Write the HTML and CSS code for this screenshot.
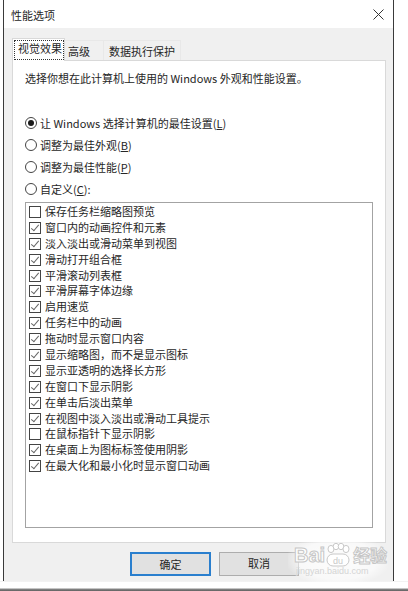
FILE: index.html
```html
<!DOCTYPE html>
<html lang="zh-CN">
<head>
<meta charset="utf-8">
<title>性能选项</title>
<link rel="stylesheet" href="styles.css">
</head>
<body>
<div class="window">
  <div class="titlebar">
    <span class="title">性能选项</span>
    <svg class="close" width="11" height="11" viewBox="0 0 11 11"><path d="M0.5 0.5 L10.5 10.5 M10.5 0.5 L0.5 10.5" stroke="#333" stroke-width="1" fill="none"/></svg>
  </div>
  <div class="client">
    <div class="tabs">
      <div class="tab sel"><span class="focus">视觉效果</span></div>
      <div class="tab t2">高级</div>
      <div class="tab t3">数据执行保护</div>
    </div>
    <div class="panel">
      <p class="desc">选择你想在此计算机上使用的 Windows 外观和性能设置。</p>
      <div class="radios">
        <div class="radio on"><span class="dot"></span><span>让 Windows 选择计算机的最佳设置(<u>L</u>)</span></div>
        <div class="radio"><span class="dot"></span><span>调整为最佳外观(<u>B</u>)</span></div>
        <div class="radio"><span class="dot"></span><span>调整为最佳性能(<u>P</u>)</span></div>
        <div class="radio"><span class="dot"></span><span>自定义(<u>C</u>):</span></div>
      </div>
      <div class="listbox">
        <div class="row"><span class="cb"></span>保存任务栏缩略图预览</div>
        <div class="row"><span class="cb on"></span>窗口内的动画控件和元素</div>
        <div class="row"><span class="cb on"></span>淡入淡出或滑动菜单到视图</div>
        <div class="row"><span class="cb on"></span>滑动打开组合框</div>
        <div class="row"><span class="cb on"></span>平滑滚动列表框</div>
        <div class="row"><span class="cb on"></span>平滑屏幕字体边缘</div>
        <div class="row"><span class="cb on"></span>启用速览</div>
        <div class="row"><span class="cb on"></span>任务栏中的动画</div>
        <div class="row"><span class="cb on"></span>拖动时显示窗口内容</div>
        <div class="row"><span class="cb on"></span>显示缩略图，而不是显示图标</div>
        <div class="row"><span class="cb on"></span>显示亚透明的选择长方形</div>
        <div class="row"><span class="cb on"></span>在窗口下显示阴影</div>
        <div class="row"><span class="cb on"></span>在单击后淡出菜单</div>
        <div class="row"><span class="cb on"></span>在视图中淡入淡出或滑动工具提示</div>
        <div class="row"><span class="cb"></span>在鼠标指针下显示阴影</div>
        <div class="row"><span class="cb on"></span>在桌面上为图标标签使用阴影</div>
        <div class="row"><span class="cb on"></span>在最大化和最小化时显示窗口动画</div>
      </div>
    </div>
    <div class="buttons">
      <div class="btn default">确定</div>
      <div class="btn">取消</div>
    </div>
    <div class="watermark">
      <div class="wm-logo"><span class="wm-bai">Bai</span><svg class="wm-paw" width="26" height="24" viewBox="0 0 26 24"><g fill="#fff" stroke="#c9c9c9" stroke-width="1"><ellipse cx="6" cy="6" rx="3" ry="3.6"/><ellipse cx="11" cy="3.5" rx="2.8" ry="3.2"/><ellipse cx="16" cy="3.5" rx="2.8" ry="3.2"/><ellipse cx="21" cy="6" rx="3" ry="3.6"/><rect x="2" y="11" width="22" height="12" rx="6"/></g><text x="13" y="20.5" font-size="9" text-anchor="middle" fill="#c9c9c9" font-family="Liberation Sans, sans-serif">du</text></svg><span class="wm-jy">经验</span></div>
      <div class="wm-url">jingyan.baidu.com</div>
    </div>
  </div>
</div>
<div class="taskbar-edge"></div>
</body>
</html>
```
FILE: styles.css
```css
html, body {
  margin: 0;
  padding: 0;
  background: #ffffff;
}
body {
  width: 408px;
  height: 591px;
  overflow: hidden;
  font-family: "Noto Sans CJK SC", "Noto Sans", sans-serif;
  font-size: 11px;
  color: #262626;
}
.window {
  margin-left: 3px;
  width: 391px;
  height: 581px;
  box-sizing: border-box;
  border-left: 1px solid #3a3a3a;
  border-right: 1px solid #3a3a3a;
  display: flex;
  flex-direction: column;
}
.titlebar {
  height: 28px;
  background: #ffffff;
  display: flex;
  align-items: center;
  justify-content: space-between;
  padding: 0 9px 0 7px;
  flex: none;
}
.title {
  line-height: 14px;
  margin-top: 1px;
}
.close {
  display: block;
  margin-top: 1px;
}
.client {
  flex: 1;
  background: #f0f0f0;
  padding: 10px 7px 0 8px;
  position: relative;
}
.tabs {
  display: flex;
  align-items: flex-end;
  height: 22px;
}
.tab {
  box-sizing: border-box;
  height: 20px;
  line-height: 14px;
  padding-top: 3px;
  background: #f0f0f0;
  border: 1px solid #e8e8e8;
  border-bottom: none;
  white-space: nowrap;
}
.tab.sel {
  position: relative;
  z-index: 1;
  width: 53px;
  height: 23px;
  margin-bottom: -1px;
  padding: 1px 0 0 1px;
  background: #ffffff;
  border-color: #d9d9d9;
}
.focus {
  display: block;
  box-sizing: border-box;
  width: 50px;
  height: 20px;
  border: 1px dotted #333;
  padding: 0 0 0 3px;
  line-height: 14px;
}
.t2 {
  width: 39px;
  padding-left: 3px;
  border-left: none;
}
.t3 {
  width: 77px;
  padding-left: 5px;
  border-left: none;
}
.panel {
  box-sizing: border-box;
  height: 483px;
  background: #ffffff;
  border: 1px solid #d9d9d9;
  padding: 9px 12px 0 12px;
}
.desc {
  margin: 0;
  line-height: 16px;
}
.radios {
  margin-top: 26px;
}
.radio {
  height: 22px;
  display: flex;
  align-items: center;
  gap: 3px;
  line-height: 14px;
}
.radio .dot {
  width: 12px;
  height: 12px;
  box-sizing: border-box;
  border: 1px solid #444;
  border-radius: 50%;
  display: flex;
  align-items: center;
  justify-content: center;
  flex: none;
}
.radio.on .dot::after {
  content: "";
  width: 6px;
  height: 6px;
  border-radius: 50%;
  background: #1a1a1a;
}
u {
  text-decoration: underline;
  text-underline-offset: 1px;
}
.listbox {
  margin-top: 2px;
  height: 326px;
  box-sizing: border-box;
  border: 1px solid #a3a3a3;
  padding: 1px 0 0 3px;
}
.row {
  height: 15.9px;
  line-height: 15.9px;
  display: flex;
  align-items: center;
  gap: 4px;
  white-space: nowrap;
}
.cb {
  width: 12px;
  height: 12px;
  box-sizing: border-box;
  border: 1px solid #444;
  flex: none;
  position: relative;
}
.cb.on::after {
  content: "";
  position: absolute;
  left: 3px;
  top: 0px;
  width: 3px;
  height: 7px;
  border-right: 1px solid #666;
  border-bottom: 1px solid #666;
  transform: rotate(40deg);
}
.buttons {
  display: flex;
  gap: 8px;
  margin: 9px 0 0 118px;
}
.btn {
  box-sizing: border-box;
  width: 80px;
  height: 24px;
  background: #e1e1e1;
  border: 1px solid #adadad;
  text-align: center;
  line-height: 21px;
}
.btn.default {
  width: 81px;
  border: 2px solid #2a7fce;
  line-height: 20px;
}
.watermark {
  position: absolute;
  left: 284px;
  top: 507px;
  width: 100px;
  height: 50px;
  background: radial-gradient(ellipse at center, rgba(255,255,255,0.85) 0%, rgba(255,255,255,0.6) 55%, rgba(255,255,255,0) 75%);
}
.wm-logo {
  display: flex;
  align-items: flex-end;
  margin-top: 8px;
  margin-left: 6px;
}
.wm-bai, .wm-jy {
  font-family: "Liberation Sans", "Noto Sans CJK SC", sans-serif;
  font-size: 20px;
  line-height: 20px;
  font-weight: bold;
  color: #ffffff;
  -webkit-text-stroke: 1px #c6c6c6;
}
.wm-jy {
  font-size: 17px;
  margin-left: 2px;
  font-family: "Noto Sans CJK SC", sans-serif;
}
.wm-paw {
  display: block;
  margin-bottom: -2px;
}
.wm-url {
  font-family: "Liberation Sans", sans-serif;
  font-size: 9px;
  color: #d4d4d4;
  margin-left: 8px;
  margin-top: 1px;
}
.taskbar-edge {
  height: 10px;
  background: linear-gradient(#e6e6e6 0, #ffffff 1px, #ffffff 7px, #8a8a8a 8px, #5f5f5f 10px);
}
```
